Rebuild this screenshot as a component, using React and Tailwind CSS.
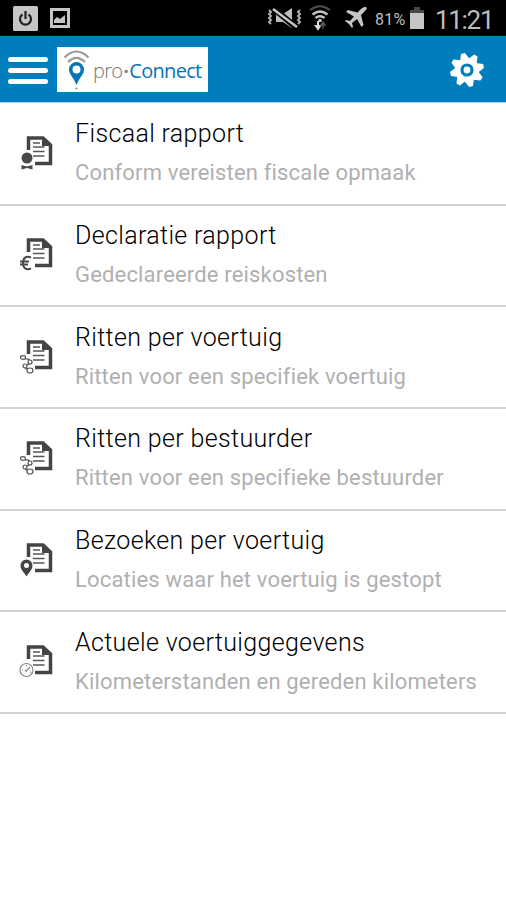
import React from 'react';

const reports = [
  { id: 1, badge: 'seal', title: 'Fiscaal rapport', subtitle: 'Conform vereisten fiscale opmaak' },
  { id: 2, badge: 'euro', title: 'Declaratie rapport', subtitle: 'Gedeclareerde reiskosten' },
  { id: 3, badge: 'route', title: 'Ritten per voertuig', subtitle: 'Ritten voor een specifiek voertuig' },
  { id: 4, badge: 'route', title: 'Ritten per bestuurder', subtitle: 'Ritten voor een specifieke bestuurder' },
  { id: 5, badge: 'pin', title: 'Bezoeken per voertuig', subtitle: 'Locaties waar het voertuig is gestopt' },
  { id: 6, badge: 'gauge', title: 'Actuele voertuiggegevens', subtitle: 'Kilometerstanden en gereden kilometers' },
];

export default function App() {
  return (
    <div className="w-full min-h-screen bg-white font-['Roboto',sans-serif]">
      <StatusBar />
      <Header />
      <main className="pt-px">
        {reports.map(report => (
          <ReportRow key={report.id} {...report} />
        ))}
      </main>
    </div>
  );
}

function StatusBar() {
  return (
    <div className="h-9 bg-black flex items-center justify-between pl-[13px] pr-[13px] text-[#bdbdbd]">
      <div className="flex items-center gap-3">
        <svg width="25" height="25" viewBox="0 0 25 25" fill="none">
          <rect width="25" height="25" rx="1.5" fill="#c6c6c6" />
          <path d="M9.5 8.5a5.5 5.5 0 1 0 6 0M12.5 5v8" stroke="#222" strokeWidth="2.2" />
        </svg>
        <svg width="20" height="22" viewBox="0 0 20 22">
          <path d="M0 1h20v20H0zM3 4v14h14V4z" fill="#c6c6c6" fillRule="evenodd" />
          <path d="M4 16v-3l3-3 3 2 5-4v8z" fill="#c6c6c6" />
        </svg>
      </div>

      <div className="flex items-center">
        {/* Sound off */}
        <svg width="34" height="24" viewBox="0 0 34 24" fill="none" className="mr-[7px]">
          <path d="M8 8h7l9-6v20l-9-6H8z" fill="#bdbdbd" />
          <path d="M5 2 29 22" stroke="#000" strokeWidth="6" />
          <path d="M5 3 29 21" stroke="#c6c6c6" strokeWidth="2.5" />
          <path d="m1 4 2 2-2 2 2 2-2 2 2 2-2 2 2 2M32 4l-2 2 2 2-2 2 2 2-2 2 2 2-2 2" stroke="#aaa" strokeWidth="2" />
        </svg>
        {/* Wifi with traffic arrows */}
        <svg width="22" height="26" viewBox="0 0 22 26" fill="none" className="mr-[13px]">
          <path d="M1 5q10-7.5 20 0" stroke="#4c4c4c" strokeWidth="2" />
          <path d="M3.5 9.5q7.5-6 15 0M6.5 13q4.5-3.5 9 0" stroke="#c6c6c6" strokeWidth="2.4" />
          <circle cx="11" cy="15.5" r="1.8" fill="#c6c6c6" />
          <path d="M9 16v5M7 21h4l-2 3z" stroke="#d8d8d8" fill="#d8d8d8" strokeWidth="2" />
          <path d="M14 24v-5M12 20l2-3 2 3z" stroke="#555" fill="#555" strokeWidth="1.5" />
        </svg>
        <svg width="24" height="24" viewBox="0 0 24 24" className="mr-[7px]">
          <path d="M22.5 1.500c-2-1-4 0-6 2l-3 3L4 4 2 6l8 4.5-4 4.5-4-1-1 1 4 3 3 4 1-1-1-4 5-4 4.5 8 2-2-2.5-10 3-3c2-2 3.5-3.5 2.5-4.5z" fill="#c6c6c6" />
        </svg>
        <span className="text-[16px] w-[35px] leading-none tracking-[0.2px] mt-[3px]">81%</span>
        <svg width="14" height="22" viewBox="0 0 14 22" className="mr-[11px]">
          <path d="M4 0h6v3h4v4H0V3h4z" fill="#484848" />
          <path d="M0 6h14v16H0z" fill="#c6c6c6" />
        </svg>
        <span className="text-[26px] w-[58px] leading-none tracking-[-1.3px] mt-[3px]">11:21</span>
      </div>
    </div>
  );
}

function Header() {
  return (
    <header className="h-[67px] bg-[#007dbc] border-b border-[#a5d0e8] flex items-center pt-px pl-2 pr-[21px]">
      <button className="flex flex-col gap-[6px] mt-px">
        <span className="block w-10 h-[5px] rounded-sm bg-white" />
        <span className="block w-10 h-[5px] rounded-sm bg-white" />
        <span className="block w-10 h-[5px] rounded-sm bg-white" />
      </button>
      <div className="ml-[9px] w-[151px] h-[45px] bg-white flex items-center">
        <svg width="36" height="46" viewBox="0 0 36 46" fill="none">
          <path d="M7.5 10.5q12-12 24 0M11 15q8.5-8.5 17 0" stroke="#999" strokeWidth="2.2" />
          <path d="M19.5 15a7.5 7.5 0 0 0-7.5 7.5c0 5 4.5 8 7.5 15.5 3-7.5 7.5-10.5 7.5-15.5a7.5 7.5 0 0 0-7.5-7.5zm0 3.5a4 4 0 1 1 0 8 4 4 0 0 1 0-8z" fill="#0873b8" fillRule="evenodd" />
          <circle cx="19.5" cy="41.5" r="1" fill="#888" />
        </svg>
        <div className="flex items-center font-['Open_Sans',sans-serif] text-[20px] leading-none tracking-[-0.7px] text-[#0873b8] mt-0.5">
          <span className="font-light text-[#777]">pro</span>
          <span className="w-[7px] text-center font-bold text-[#888]">·</span>
          <span className="font-medium">Connect</span>
        </div>
      </div>
      <svg width="36" height="36" viewBox="-18 -18 36 36" className="ml-auto">
        <g fill="#fff">
          <circle r="11.5" />
          {[0, 45, 90, 135, 180, 225, 270, 315].map(angle => (
            <path key={angle} d="M-5-10-2.5-17H1.5L5-10z" transform={`rotate(${angle - 12})`} />
          ))}
        </g>
        <circle r="5" fill="none" stroke="#007dbc" strokeWidth="3.2" />
      </svg>
    </header>
  );
}

function ReportRow({ badge, title, subtitle }) {
  return (
    <div className="h-[101.7px] border-b-2 border-[#d2d2d2] flex items-center pl-[18px]">
      <ReportIcon badge={badge} />
      <div className="ml-[21px] -mt-px whitespace-nowrap">
        <p className="text-[25px] leading-[39px] tracking-[0.35px] font-light text-black">{title}</p>
        <p className="text-[22px] leading-[39px] tracking-[0.17px] text-[#b0b0b0]">{subtitle}</p>
      </div>
    </div>
  );
}

function ReportIcon({ badge }) {
  return (
    <svg width="36" height="36" viewBox="0 0 36 36" fill="none" className="shrink-0 -mt-px">
      <path d="M10.5 15V3H25l7.5 7v18.5H17" stroke="#444" strokeWidth="3.5" />
      <path d="M24 2v9h9z" fill="#444" />
      <path d="M15 8h7M15 12h11.5M15 16.5h11.5M15 21h11.5" stroke="#555" strokeWidth="1.6" />
      {badge === 'seal' && (
        <g fill="#484848">
          <circle cx="9" cy="23" r="5.5" />
          <path d="m3.5 30 5.5 1.5 5.5-1.5v4.5L9 33l-5.5 1.5z" />
        </g>
      )}
      {badge === 'euro' && (
        <path d="M13 20.5c-5-2-8 .5-8 5.5s3 7.5 8 5.5M2 24.5h9M2 27.5h8" stroke="#484848" strokeWidth="2" />
      )}
      {badge === 'route' && (
        <g stroke="#555" strokeWidth="1.2" fill="#fff">
          <path d="M7 20c5-1 8 4 2 6s2 6 3 4" fill="none" />
          <ellipse cx="5" cy="18.5" rx="2.5" ry="1.8" />
          <circle cx="12" cy="23" r="2" />
          <circle cx="7" cy="27" r="2" />
          <ellipse cx="12" cy="31.5" rx="3" ry="2.5" />
        </g>
      )}
      {badge === 'pin' && (
        <path d="M8.5 17.5a6 6 0 0 0-6 6c0 4 3 6 6 11 3-5 6-7 6-11a6 6 0 0 0-6-6zm0 3.5a2.5 2.5 0 1 1 0 5 2.5 2.5 0 0 1 0-5z" fill="#444" fillRule="evenodd" />
      )}
      {badge === 'gauge' && (
        <g stroke="#888" strokeWidth="1.2">
          <circle cx="8.5" cy="26" r="6.5" fill="#fff" />
          <path d="m8 27 4-4M4 26h1M8.5 21v1M12 28l1 .5M7 26l2 2" />
        </g>
      )}
    </svg>
  );
}
